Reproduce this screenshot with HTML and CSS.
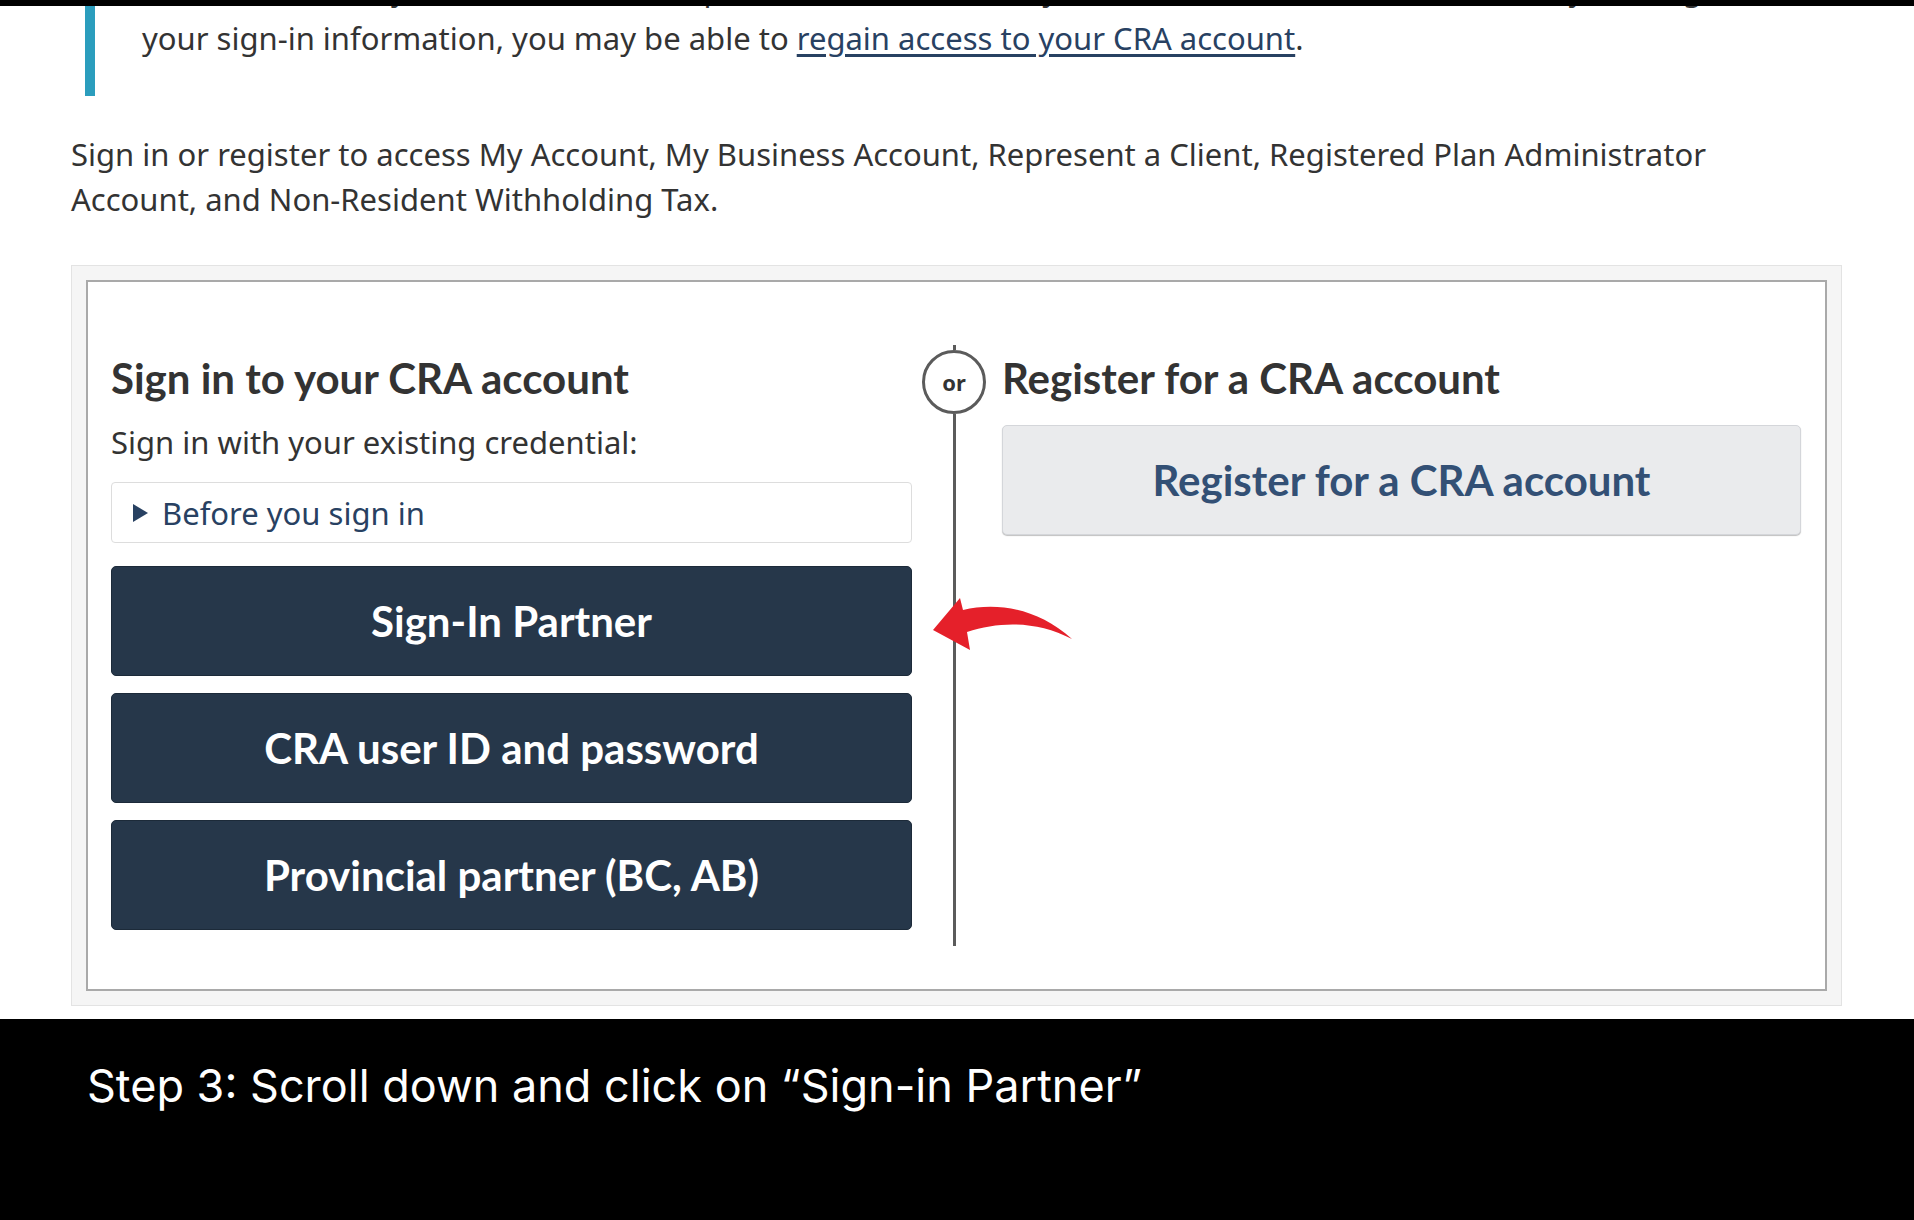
FILE: index.html
```html
<!DOCTYPE html>
<html lang="en">
<head>
<meta charset="utf-8">
<title>Sign in to your CRA account</title>
<link rel="stylesheet" href="styles.css">
</head>
<body>
<div class="frame-top"></div>
<main class="page">
  <div class="callout">
    <p class="callout-prev">In the event that you cannot recall the password or user ID of your account and have lost some of your original or</p>
    <p>your sign-in information, you may be able to <a href="#">regain access to your CRA account</a>.</p>
  </div>
  <p class="intro">Sign in or register to access My Account, My Business Account, Represent a Client, Registered Plan Administrator Account, and Non-Resident Withholding Tax.</p>
  <section class="well">
    <div class="panel">
      <div class="col col-signin">
        <h2 class="col-title">Sign in to your CRA account</h2>
        <p class="col-sub">Sign in with your existing credential:</p>
        <div class="details"><span class="tri"></span><span>Before you sign in</span></div>
        <a class="btn btn-dark" href="#">Sign-In Partner</a>
        <a class="btn btn-dark" href="#">CRA user ID and password</a>
        <a class="btn btn-dark" href="#">Provincial partner (BC, AB)</a>
      </div>
      <div class="divider">
        <span class="line line-top"></span>
        <span class="or">or</span>
        <span class="line line-bottom"></span>
      </div>
      <div class="col col-register">
        <h2 class="col-title">Register for a CRA account</h2>
        <a class="btn btn-light" href="#">Register for a CRA account</a>
      </div>
    </div>
  </section>
</main>
<footer class="caption">
  <p>Step 3: Scroll down and click on “Sign-in Partner”</p>
</footer>
<svg class="arrow" viewBox="0 0 155 65" width="155" height="65" aria-hidden="true">
  <path d="M8 38 L35 6 L38 18 C72 10 112 16 147 47 C112 29 76 29 42 40 L45 58 Z" fill="#e5202a"/>
</svg>
</body>
</html>
```
FILE: styles.css
```css
html, body {
  margin: 0;
  padding: 0;
  overflow: hidden;
  background: #ffffff;
}
body {
  width: 1914px;
  height: 1220px;
  position: relative;
  font-family: "Noto Sans", "Open Sans", sans-serif;
  color: #333333;
}
.frame-top {
  position: absolute;
  left: 0;
  top: 0;
  width: 100%;
  height: 6px;
  background: #000000;
  z-index: 2;
}
.page {
  padding: 0 72px 0 71px;
}
.callout {
  margin: -43px 0 0 14px;
  padding: 10px 0 35px 47px;
  border-left: 10px solid #2b9dbd;
}
.callout p {
  margin: 0;
  font-size: 31px;
  line-height: 45px;
  white-space: nowrap;
}
.callout .callout-prev {
  margin-bottom: 4px;
}
.callout a, .intro a {
  color: #284162;
  text-decoration: underline;
  text-underline-offset: 4px;
}
.intro {
  margin: 36px 0 0 0;
  font-size: 31px;
  line-height: 45px;
  max-width: 1730px;
}
.well {
  margin-top: 43px;
  background: #f5f5f5;
  border: 1px solid #e3e3e3;
  padding: 14px;
}
.panel {
  background: #ffffff;
  border: 2px solid #a9a9a9;
  padding: 71px 24px 59px 23px;
  display: grid;
  grid-template-columns: 801px 90px 1fr;
}
.col {
  display: flex;
  flex-direction: column;
}
.col-title {
  margin: 0;
  font-family: Lato, "Noto Sans", sans-serif;
  font-weight: 700;
  font-size: 42px;
  line-height: 50px;
  color: #333333;
}
.col-sub {
  margin: 17px 0 0 0;
  font-size: 31px;
  line-height: 45px;
}
.details {
  margin-top: 17px;
  height: 59px;
  border: 1px solid #dddddd;
  border-radius: 4px;
  display: flex;
  align-items: center;
  padding-left: 21px;
  gap: 14px;
  font-size: 31px;
  color: #284162;
}
.tri {
  width: 0;
  height: 0;
  border-top: 9px solid transparent;
  border-bottom: 9px solid transparent;
  border-left: 15px solid #284162;
}
.btn {
  display: flex;
  align-items: center;
  justify-content: center;
  height: 108px;
  border-radius: 5px;
  text-decoration: none;
  font-family: Lato, "Noto Sans", sans-serif;
  font-weight: 700;
  font-size: 42px;
}
.btn-dark {
  background: #26374a;
  border: 1px solid #1c2a39;
  color: #ffffff;
  margin-top: 17px;
}
.col-signin .details + .btn-dark {
  margin-top: 23px;
}
.btn-light {
  margin-top: 22px;
  background: #eaebed;
  border: 1px solid #d4d6da;
  box-shadow: 0 1px 1px rgba(0,0,0,0.25);
  color: #335075;
}
.divider {
  display: flex;
  flex-direction: column;
  align-items: center;
  padding-right: 6px;
  margin-top: -8px;
  margin-bottom: -16px;
}
.line {
  width: 3px;
  background: #5b5b5b;
}
.line-top {
  height: 5px;
}
.line-bottom {
  flex: 1;
}
.or {
  width: 58px;
  height: 58px;
  border: 3px solid #5b5b5b;
  border-radius: 50%;
  display: flex;
  align-items: center;
  justify-content: center;
  font-family: "Noto Sans", sans-serif;
  font-weight: 700;
  font-size: 22px;
  color: #333333;
  background: #ffffff;
}
.caption {
  margin-top: 13px;
  height: 201px;
  background: #000000;
  padding: 34px 0 0 87px;
  box-sizing: border-box;
}
.caption p {
  margin: 0;
  font-family: Inter, "Noto Sans", sans-serif;
  font-size: 45px;
  line-height: 66px;
  color: #ffffff;
}
.arrow {
  position: absolute;
  left: 925px;
  top: 592px;
}
```
